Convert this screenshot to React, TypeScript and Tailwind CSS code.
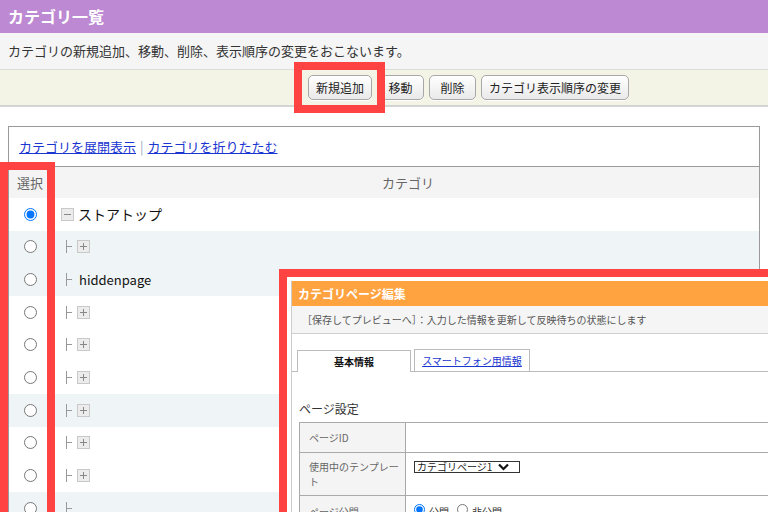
import React from 'react';

const FONT = "font-['Noto_Sans_CJK_JP','Noto_Sans',sans-serif]";

// row shading taken from the reference (true = light blue-gray)
const rows: { kind: 'root' | 'child' | 'leaf' | 'line'; label?: string; shaded: boolean }[] = [
  { kind: 'root', label: 'ストアトップ', shaded: false },
  { kind: 'child', shaded: true },
  { kind: 'leaf', label: 'hiddenpage', shaded: true },
  { kind: 'child', shaded: false },
  { kind: 'child', shaded: false },
  { kind: 'child', shaded: false },
  { kind: 'child', shaded: true },
  { kind: 'child', shaded: false },
  { kind: 'child', shaded: false },
  { kind: 'line', shaded: true },
];

const TreeLine = () => (
  <svg width="7" height="13" viewBox="0 0 7 13" className="shrink-0">
    <path d="M0.5 0V13M0.5 6.5H6" stroke="#999" strokeWidth="1" fill="none" />
  </svg>
);

const ToggleBox = ({ plus }: { plus: boolean }) => (
  <svg width="13" height="13" viewBox="0 0 13 13" className="shrink-0">
    <rect x="0.5" y="0.5" width="12" height="12" fill="#ececec" stroke="#c9c9c9" />
    <path d="M3 6.5H10" stroke="#888" />
    {plus && <path d="M6.5 3V10" stroke="#888" />}
  </svg>
);

const Btn = ({ children }: { children: React.ReactNode }) => (
  <button className="h-[25px] min-w-[47px] px-[7px] rounded-[5px] border border-[#a8a8a8] bg-gradient-to-b from-white to-[#e9e9e9] text-[12px] text-[#222] leading-none shadow-[0_1px_0_#fff]">
    {children}
  </button>
);

export default function App() {
  return (
    <div className={`relative w-[768px] h-[512px] overflow-hidden bg-white ${FONT}`}>
      {/* title bar */}
      <div className="h-[33px] bg-[#bc89d2] px-2 text-[16px] font-bold leading-[33px] text-white">
        カテゴリ一覧
      </div>
      <div className="h-[37px] bg-[#f5f5f5] border-b border-[#dcdcdc] px-2 flex items-center text-[13px] text-[#333]">
        カテゴリの新規追加、移動、削除、表示順序の変更をおこないます。
      </div>
      <div className="h-[37px] bg-[#f4f4e6] border-b-2 border-[#d4d4d4] pl-[308px] flex items-center gap-[5px]">
        <Btn>新規追加</Btn>
        <Btn>移動</Btn>
        <Btn>削除</Btn>
        <Btn>カテゴリ表示順序の変更</Btn>
      </div>

      {/* category box */}
      <div className="mx-2 mt-[19px] border border-[#9a9a9a]">
        <div className="h-[39px] flex items-center pl-[10px] text-[13px]">
          <a className="text-[#1a35d0] underline">カテゴリを展開表示</a>
          <span className="mx-[4px] text-[#9ab]">|</span>
          <a className="text-[#1a35d0] underline">カテゴリを折りたたむ</a>
        </div>
        <div className="h-[32px] flex items-center border-t border-[#9a9a9a] bg-[#f4f4f4] text-[13px] text-[#666]">
          <div className="w-[42px] text-center">選択</div>
          <div className="flex-1 text-center pl-[6px]">カテゴリ</div>
        </div>
        {rows.map((r, i) => (
          <div
            key={i}
            className={`h-[32.67px] flex items-center ${r.shaded ? 'bg-[#eff4f7]' : 'bg-white'}`}
          >
            <div className="w-[42px] flex justify-center">
              <input type="radio" name="sel" defaultChecked={i === 0} className="m-0 w-[13px] h-[13px]" />
            </div>
            {r.kind === 'root' ? (
              <div className="pl-[10px] flex items-center gap-[4px]">
                <ToggleBox plus={false} />
                <span className="text-[14px] text-[#111]">{r.label}</span>
              </div>
            ) : (
              <div className="pl-[15px] flex items-center">
                <TreeLine />
                {r.kind === 'child' && (
                  <span className="ml-[4px] flex">
                    <ToggleBox plus />
                  </span>
                )}
                {r.kind === 'leaf' && (
                  <span className="ml-[6px] text-[13px] text-[#111]">{r.label}</span>
                )}
              </div>
            )}
          </div>
        ))}
      </div>

      {/* highlight: new button */}
      <div className="absolute left-[294px] top-[62px] w-[91px] h-[51px] border-[8px] border-[#ff4343]" />
      {/* highlight: select column */}
      <div className="absolute left-0 top-[162px] w-[55px] h-[360px] border-[8px] border-[#ff4343]" />

      {/* edit panel overlay */}
      <div className="absolute left-[279px] top-[269px] w-[540px] h-[300px] border-[8px] border-[#ff4343] bg-white pl-[4px] pt-[4px]">
        <div className="h-full border-l border-[#cccccc] bg-white">
          <div className="h-[25px] bg-[#ffa340] pl-[6px] flex items-center text-[12px] font-bold text-white">
            カテゴリページ編集
          </div>
          <div className="h-[28px] bg-[#f5f5f5] border-b border-[#cfcfcf] pl-[10px] flex items-center text-[10px] text-[#555]">
            ［保存してプレビューへ］：入力した情報を更新して反映待ちの状態にします
          </div>
          <div className="mt-[16px] pl-[5px] flex items-end border-b border-[#bbbbbb] h-[22px]">
            <div className="w-[114px] h-[22px] mb-[-1px] border border-b-0 border-[#bbbbbb] bg-white flex items-center justify-center text-[10px] font-bold text-[#111]">
              基本情報
            </div>
            <div className="ml-[3px] w-[116px] h-[22px] border border-b-0 border-[#bbbbbb] bg-white flex items-center justify-center text-[10px]">
              <a className="text-[#1a35d0] underline">スマートフォン用情報</a>
            </div>
          </div>
          <div className="ml-[7px] mt-[28px] mb-[4px] h-[18px] leading-[18px] text-[12px] text-[#333]">
            ページ設定
          </div>
          <div className="ml-[7px] border-t border-l border-[#aaaaaa] text-[10px] text-[#666]">
            <div className="flex border-b border-[#aaaaaa] h-[30px]">
              <div className="w-[106px] shrink-0 bg-[#f4f4f4] border-r border-[#aaaaaa] pl-[9px] flex items-center">
                ページID
              </div>
              <div className="flex-1" />
            </div>
            <div className="flex border-b border-[#aaaaaa] h-[43px]">
              <div className="w-[106px] shrink-0 bg-[#f4f4f4] border-r border-[#aaaaaa] pl-[9px] pr-[6px] pt-[6px] leading-[15px]">
                使用中のテンプレート
              </div>
              <div className="flex-1 pl-[8px] pt-[8px]">
                <div className="w-[106px] h-[12px] border border-[#333] flex items-center pl-[2px] gap-[6px] text-[10px] text-[#222] leading-none">
                  <span>カテゴリページ1</span>
                  <svg width="11" height="8" viewBox="0 0 11 8">
                    <path d="M1 1.5L5.5 6L10 1.5" stroke="#111" strokeWidth="2.2" fill="none" />
                  </svg>
                </div>
              </div>
            </div>
            <div className="flex h-[30px]">
              <div className="w-[106px] shrink-0 bg-[#f4f4f4] border-r border-[#aaaaaa] pl-[9px] pt-[8px]">
                ページ公開
              </div>
              <div className="flex-1 pl-[8px] pt-[8px] flex items-start gap-[4px] text-[#333]">
                <input type="radio" name="pub" defaultChecked className="m-0 w-[11px] h-[11px]" />
                <span>公開</span>
                <input type="radio" name="pub" className="m-0 ml-[4px] w-[11px] h-[11px]" />
                <span>非公開</span>
              </div>
            </div>
          </div>
        </div>
      </div>
    </div>
  );
}
